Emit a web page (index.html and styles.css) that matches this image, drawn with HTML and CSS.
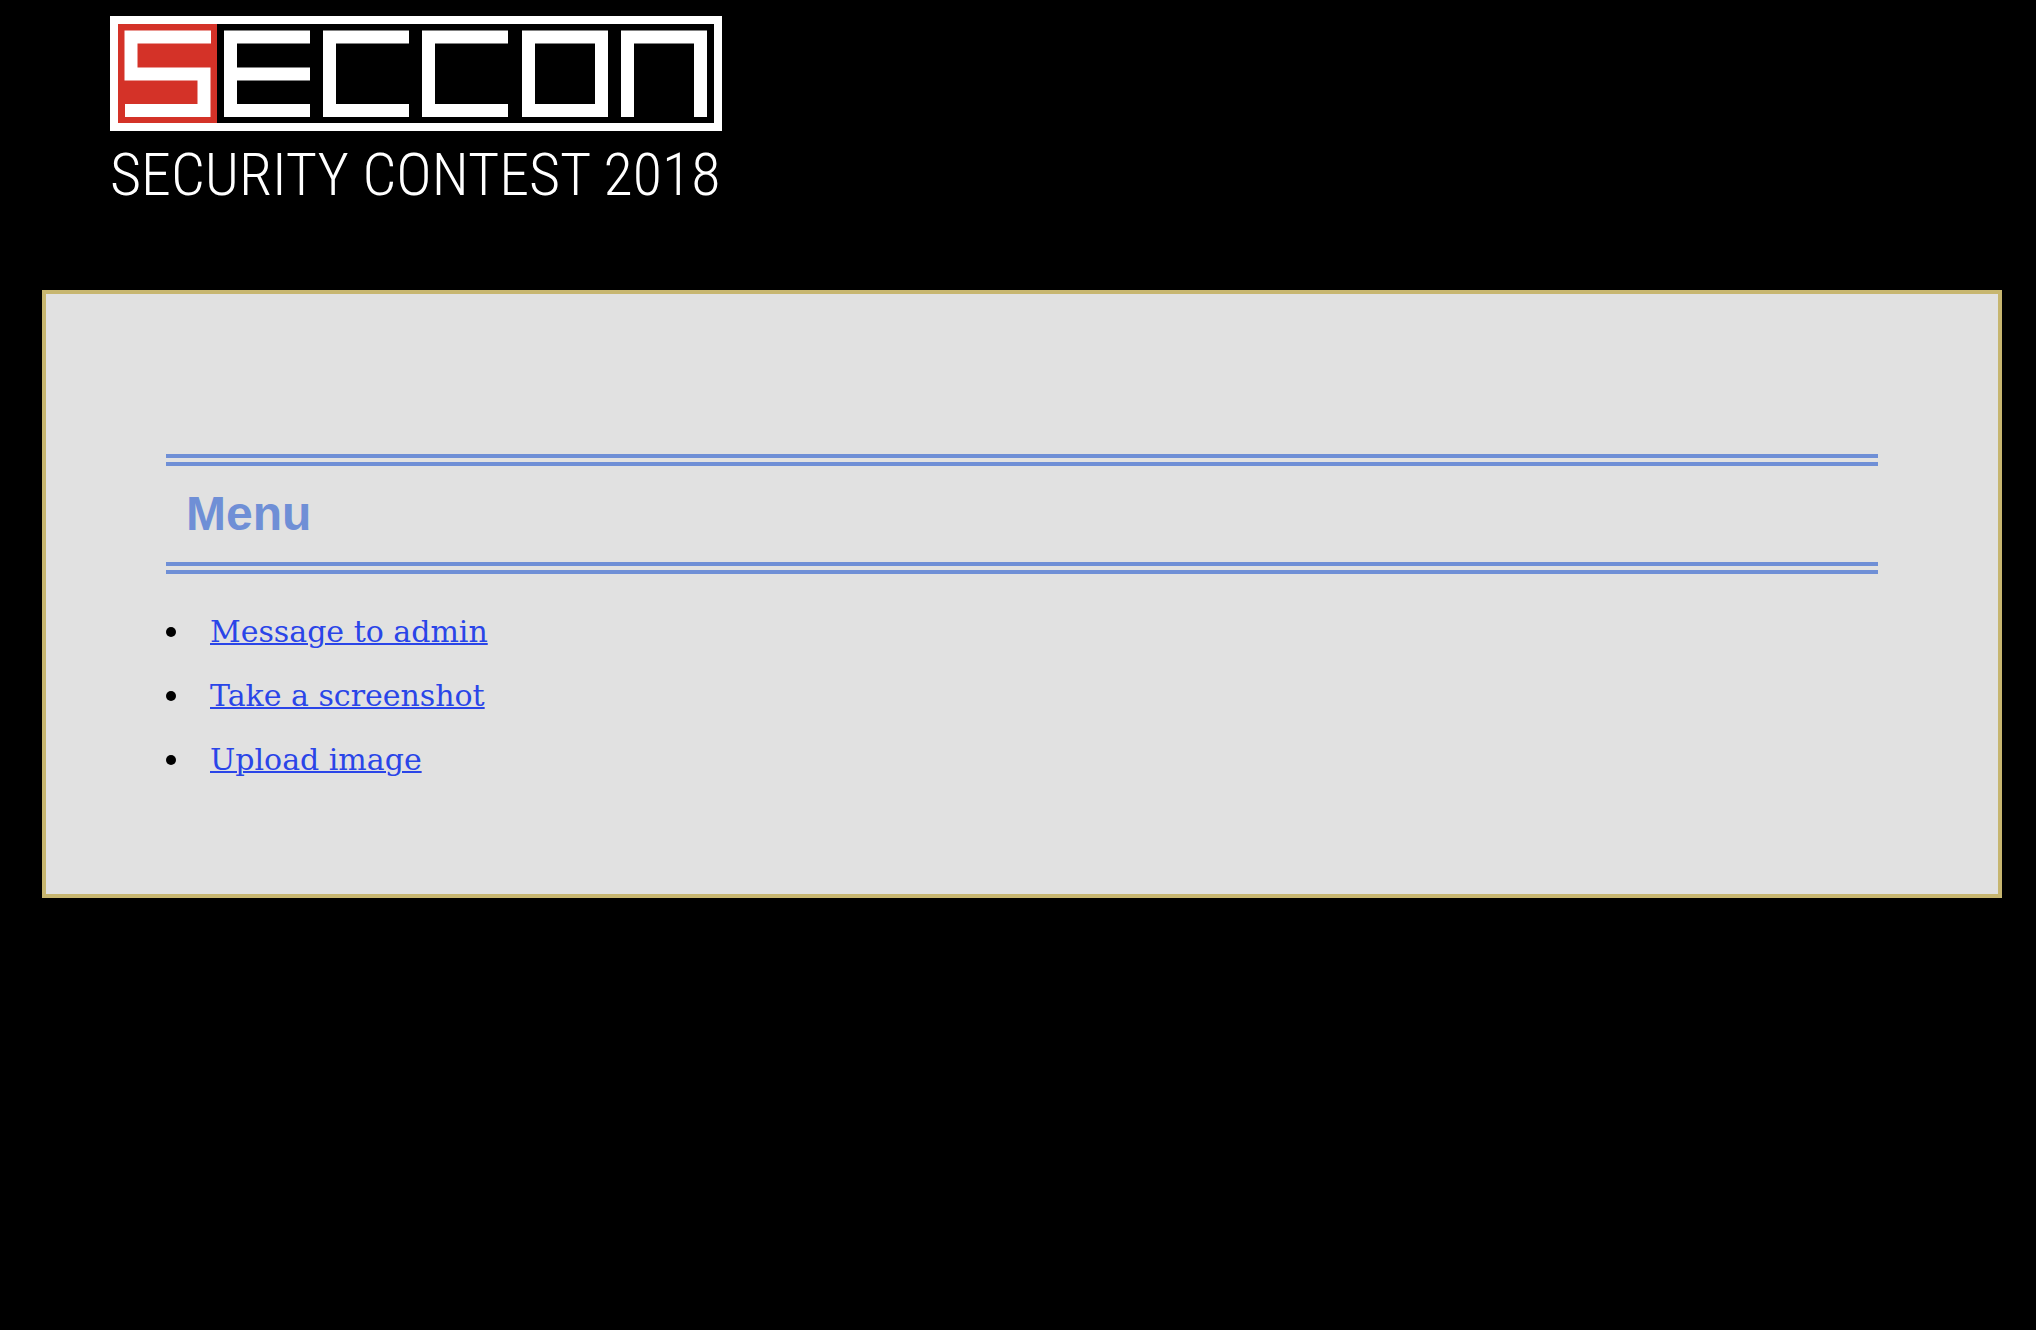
FILE: index.html
```html
<!DOCTYPE html>
<html lang="en">
<head>
<meta charset="utf-8">
<meta name="viewport" content="width=device-width, initial-scale=1">
<title>SECCON 2018</title>
<link rel="stylesheet" href="styles.css">
</head>
<body>
<header class="site-header">
  <svg class="logo" viewBox="0 0 612 115" role="img" aria-label="SECCON">
    <rect x="4" y="4" width="604" height="107" fill="none" stroke="#fff" stroke-width="8"/>
    <rect x="8" y="8" width="99" height="99" fill="#d43228"/>
    <g fill="none" stroke="#fff" stroke-width="13">
      <path d="M101 21H21V58H94V94.500H15"/>
      <path d="M200 21H120.500V94.500H200M120.500 58H200"/>
      <path d="M299 21H219.500V94.500H299"/>
      <path d="M398 21H318.500V94.500H398"/>
      <path d="M418.500 21H491.500V94.500H418.500Z"/>
      <path d="M517.500 101V21H590.500V101"/>
    </g>
  </svg>
  <p class="tagline">SECURITY CONTEST 2018</p>
</header>
<main class="panel">
  <h1 class="panel-title">Menu</h1>
  <nav aria-label="Menu">
    <ul class="menu">
      <li class="menu-item"><a href="#message">Message to admin</a></li>
      <li class="menu-item"><a href="#screenshot">Take a screenshot</a></li>
      <li class="menu-item"><a href="#upload">Upload image</a></li>
    </ul>
  </nav>
</main>
</body>
</html>
```
FILE: styles.css
```css
* {
  box-sizing: border-box;
}

body {
  margin: 0;
  padding: 16px 34px 0 42px;
  background: #000;
  color: #000;
  font-family: "DejaVu Serif", serif;
  font-size: 30px;
}

.site-header {
  padding: 0 68px;
}

.logo {
  display: block;
  width: 612px;
  max-width: 100%;
}

.tagline {
  margin: 0 0 71px;
  color: #fff;
  font-family: "Roboto Condensed", "Liberation Sans Narrow", sans-serif;
  font-size: 60px;
  font-weight: 300;
  line-height: 88px;
  white-space: nowrap;
}

.panel {
  padding: 160px 120px 102px;
  border: 4px solid #c7b670;
  background: #e1e1e1;
}

.panel-title {
  margin: 0 0 26px;
  padding: 22px 20px;
  border: double #6f8fd6;
  border-width: 12px 0;
  color: #6f8fd6;
  font-family: "Liberation Sans", Arial, sans-serif;
  font-size: 48px;
  line-height: 52px;
}

.menu {
  margin: 0;
  padding: 0;
  list-style: none;
}

.menu-item {
  display: flex;
  align-items: center;
  gap: 34px;
  line-height: 64px;
}

.menu-item::before {
  content: "";
  width: 10px;
  height: 10px;
  border-radius: 50%;
  background: #000;
}

.menu-item a {
  color: #2a45e8;
  text-decoration-thickness: 2px;
}
```
